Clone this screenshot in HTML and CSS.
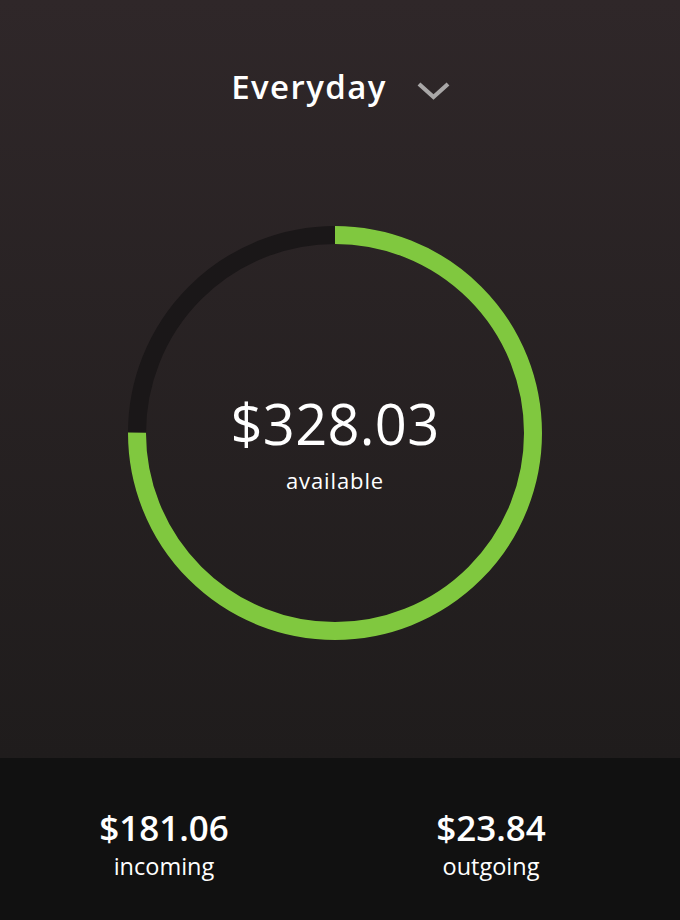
FILE: index.html
```html
<!DOCTYPE html>
<html>
<head>
<meta charset="utf-8">
<link rel="stylesheet" href="styles.css">
</head>
<body>
<div class="app">
  <section class="top">
    <header class="title-row">
      <h1 class="title">Everyday</h1>
      <svg class="chev" width="33" height="20" viewBox="0 0 33 20"><polyline points="2,4 16.5,17 31,4" fill="none" stroke="#a9a7a7" stroke-width="4.2" stroke-linecap="butt"/></svg>
    </header>
    <div class="ring">
      <svg class="ring-svg" width="414" height="414" viewBox="0 0 414 414">
        <circle cx="207" cy="207" r="198" fill="none" stroke="#1a1718" stroke-width="18"/>
        <circle cx="207" cy="207" r="198" fill="none" stroke="#80c83f" stroke-width="18" stroke-dasharray="933.05 1244.07" transform="rotate(-90 207 207)"/>
      </svg>
      <div class="ring-text">
        <div class="amount">$328.03</div>
        <div class="label">available</div>
      </div>
    </div>
  </section>
  <section class="bottom">
    <div class="stat">
      <div class="stat-amount">$181.06</div>
      <div class="stat-label">incoming</div>
    </div>
    <div class="stat">
      <div class="stat-amount">$23.84</div>
      <div class="stat-label">outgoing</div>
    </div>
  </section>
</div>
</body>
</html>
```
FILE: styles.css
```css
html, body {
  margin: 0;
  padding: 0;
}
body {
  width: 680px;
  height: 920px;
  overflow: hidden;
  font-family: "Open Sans", "Noto Sans", sans-serif;
  color: #ffffff;
  background: #111111;
}
.app {
  display: flex;
  flex-direction: column;
  height: 920px;
}
.top {
  height: 758px;
  flex: none;
  background: linear-gradient(180deg, #2f2729 0%, #1f1c1c 100%);
  display: flex;
  flex-direction: column;
  align-items: center;
}
.title-row {
  display: flex;
  align-items: flex-start;
  gap: 30px;
  margin-top: 61px;
  margin-left: 1px;
  height: 52px;
}
.title {
  margin: 0;
  font-size: 33px;
  font-weight: 600;
  letter-spacing: 1.4px;
  line-height: 52px;
}
.chev {
  display: block;
  margin-top: 19px;
}
.ring {
  position: relative;
  width: 414px;
  height: 414px;
  margin-top: 113px;
  margin-left: -10px;
}
.ring-svg {
  display: block;
}
.ring-text {
  position: absolute;
  inset: 0;
  display: flex;
  flex-direction: column;
  align-items: center;
  padding-top: 165px;
}
.amount {
  font-size: 56px;
  font-weight: 500;
  line-height: 64px;
  letter-spacing: 0.3px;
}
.label {
  font-size: 22px;
  line-height: 28px;
  margin-top: 11px;
  letter-spacing: 0.9px;
}
.bottom {
  flex: 1;
  background: #111111;
  display: flex;
  justify-content: space-between;
  padding: 48px 89px 0 64px;
}
.stat {
  width: 200px;
  display: flex;
  flex-direction: column;
  align-items: center;
}
.stat-amount {
  font-size: 35px;
  font-weight: 600;
  line-height: 44px;
}
.stat-label {
  font-size: 23.5px;
  line-height: 30px;
  margin-top: 1px;
}
```
